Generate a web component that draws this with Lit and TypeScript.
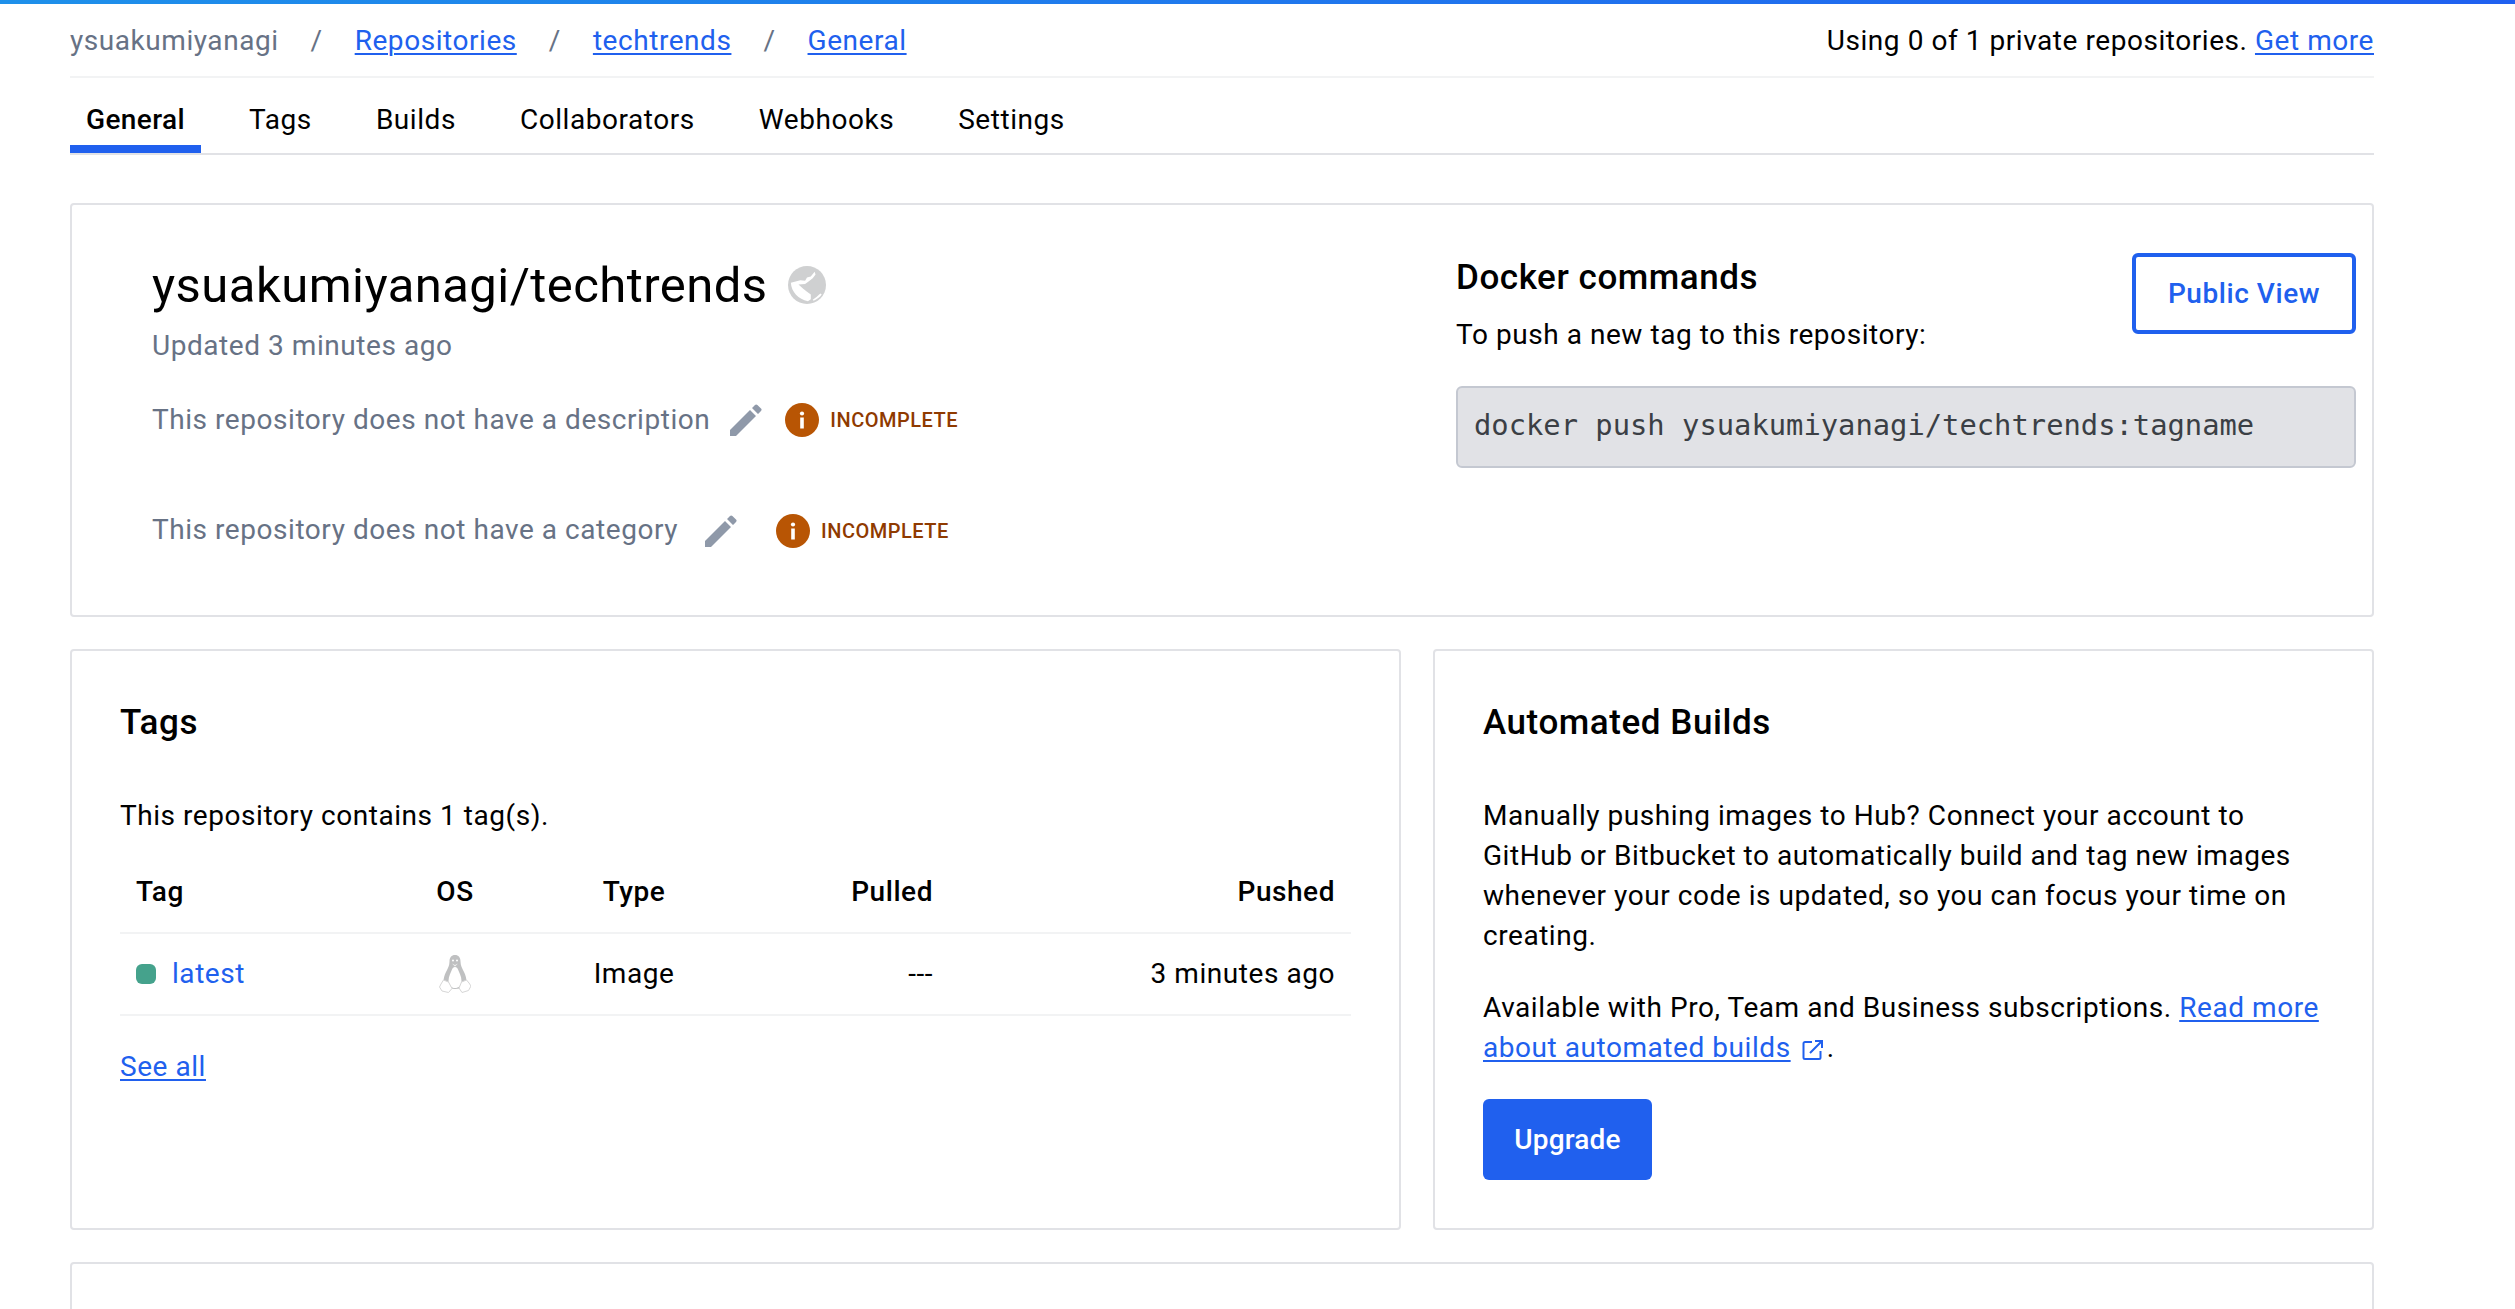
import { LitElement, html, css } from "lit";
import { customElement } from "lit/decorators.js";

const pencil = html`<svg class="pencil" viewBox="0 0 32 32"><path d="M0 32v-6L20 6l6 6L6 32z M22 4l3-3c.8-.8 1.600-.8 2.400 0l3.600 3.600c.8.800.8 1.600 0 2.400l-3 3z" fill="#8f99a9"/></svg>`;
const info = html`<svg class="info" viewBox="0 0 34 34"><circle cx="17" cy="17" r="17" fill="#b85504"/><circle cx="17" cy="10.500" r="2.100" fill="#fff"/><rect x="15.200" y="14.500" width="3.600" height="11" fill="#fff"/></svg>`;
const globe = html`<svg class="globe" viewBox="0 0 40 40"><circle cx="20" cy="20" r="20" fill="#cfd0d1"/>
  <path d="M28 6l-4 5-4 1-2 3.500-5-.5-10 2.500C3.500 27 11 35 21 37l3-2v-5l-4-3-4-3-5-4.500 7-.5 4-3 4-3 3-4z" fill="#fff"/>
  <path d="M26 35.500l4-3 4-3.500 1.500 1c-2 3-5 5-8.500 6.500z" fill="#fff"/>
</svg>`;
const penguin = html`<svg class="penguin" viewBox="0 0 32 40">
  <path d="M16 1c-3.500 0-5.500 2.500-5.500 6.500 0 4-1.500 6.500-3.500 10.500-1.500 3-2.500 6-2.500 10 0 4 4 7 11.500 7s11.500-3 11.500-7c0-4-1-7-2.500-10-2-4-3.500-6.500-3.500-10.500C21.500 3.500 19.500 1 16 1z" fill="#bfc0c1"/>
  <path d="M16 13c-1.500 0-2.500 1-3 2.500-1 3-3.500 6.500-3.500 11.500 0 4.500 3 7 6.500 7s6.500-2.500 6.500-7c0-5-2.500-8.500-3.500-11.500-.5-1.500-1.500-2.500-3-2.500z" fill="#fff"/>
  <path d="M13 9.500l3 1.500 3-1.500-3 3z" fill="#f1f1f1"/>
  <circle cx="14" cy="6.500" r="1" fill="#fff"/><circle cx="18" cy="6.500" r="1" fill="#fff"/>
  <path d="M4.500 26l5 2 3.500 6.500-3.500 4L3 37l-2.500-4 1.500-3z M27.500 26l-5 2-2.500 6 3 4.500 6.500-2 2.500-4.500-2-3z" fill="#fff" stroke="#d6d6d6" stroke-width="1"/>
</svg>`;
const external = html`<svg class="ext" viewBox="0 0 22 22" fill="none" stroke="#2060ee" stroke-width="2"><path d="M10 3H3a1.500 1.500 0 0 0-1.500 1.500v14A1.500 1.500 0 0 0 3 20h14a1.500 1.500 0 0 0 1.500-1.500V12"/><path d="M8 14L20 2M13 2h7v7"/></svg>`;

@customElement("app-root")
export class AppRoot extends LitElement {
  static styles = css`
    :host { display: block; font-family: Roboto, "Liberation Sans", sans-serif; font-size: 28px; line-height: 40px; letter-spacing: 0.55px; color: #000; background: #fff; height: 1309px; overflow: hidden; }
    * { box-sizing: border-box; }
    a { color: #2060ee; text-decoration: underline; text-underline-offset: 3px; text-decoration-thickness: 2px; }
    .topbar { height: 4px; background: linear-gradient(90deg, #1e90ea, #2060f0); }
    .page { margin-left: 70px; width: 2304px; }
    .crumbs { display: flex; justify-content: space-between; height: 74px; padding-top: 17px; border-bottom: 2px solid #f2f3f4; }
    .crumbs-left { display: flex; color: #677285; }
    .crumbs-left .sep { margin: 0 32px; color: #677285; }
    .tabs { display: flex; height: 77px; border-bottom: 2px solid #e1e2e6; }
    .tab { padding: 22px 16px 0; margin-right: 32px; height: 75px; }
    .tab.active { font-weight: 500; letter-spacing: 0.4px; border-bottom: 8px solid #2060ee; }
    .card { background: #fff; border: 2px solid #e1e2e6; border-radius: 4px; }
    .hero { margin-top: 48px; height: 414px; display: flex; }
    .hero-left { width: 1384px; padding: 49px 0 0 80px; }
    .title { display: flex; align-items: center; gap: 20px; font-size: 49px; line-height: 64px; letter-spacing: 0.44px; }
    .globe { width: 38px; height: 38px; margin-bottom: 2px; }
    .updated { color: #677285; margin-top: 8px; }
    .row { display: flex; align-items: center; color: #677285; height: 40px; }
    .row.one { margin-top: 34px; }
    .row.two { margin-top: 71px; }
    .row.two span:first-child { margin-bottom: 3px; }
    .pencil { width: 32px; height: 32px; margin-left: 20px; }
    .row.two .pencil { margin-left: 27px; }
    .info { width: 34px; height: 34px; }
    .row.one .info { margin-left: 23px; }
    .row.two .info { margin-left: 39px; }
    .badge { font-size: 20px; font-weight: 500; color: #8f3a00; margin-left: 11px; letter-spacing: 0.5px; }
    .hero-right { flex: 1; padding: 49px 16px 0 0; }
    .hero-head { display: flex; justify-content: space-between; align-items: flex-start; }
    .h2 { font-size: 35px; font-weight: 500; line-height: 48px; }
    .push { margin-top: 13px; }
    .public { width: 224px; height: 81px; margin-top: -1px; border: 4px solid #2060ee; border-radius: 6px; color: #2060ee; font-weight: 500; display: flex; align-items: center; justify-content: center; }
    .code { margin-top: 31px; height: 82px; padding: 0 0 4px 16px; background: #e1e2e6; border: 2px solid #c4c8d1; border-radius: 6px; display: flex; align-items: center; font-family: "DejaVu Sans Mono", monospace; font-size: 28.800px; letter-spacing: 0; color: #3b3f45; }
    .grid { display: grid; grid-template-columns: 1331px 941px; gap: 32px; margin-top: 32px; }
    .panel { height: 581px; padding: 50px 48px 0; }
    .panel .h2 { line-height: 44px; }
    .intro { margin-top: 51px; }
    .table { display: grid; grid-template-columns: 275px 120px 238px 196px 402px; margin-top: 14px; }
    .cell { display: flex; align-items: center; padding: 0 16px; border-bottom: 2px solid #f2f3f4; }
    .th { font-weight: 500; height: 84px; padding-top: 2px; }
    .tr { height: 82px; }
    .r { justify-content: flex-end; }
    .c { justify-content: center; padding-left: 0; padding-right: 0; }
    .dot { width: 20px; height: 20px; border-radius: 6px; background: #45a28c; margin-right: 16px; }
    .tag-link { color: #2060ee; text-decoration: none; }
    .penguin { width: 32px; height: 40px; }
    .seeall { display: inline-block; margin-top: 31px; }
    .para { margin: 0; }
    .para + .para { margin-top: 32px; }
    .ext { width: 22px; height: 22px; margin: 0 3px 0 11px; vertical-align: -4px; }
    .upgrade { margin-top: 31px; width: 169px; height: 81px; background: #2060ee; color: #fff; font-weight: 500; letter-spacing: 0.2px; border-radius: 6px; display: flex; align-items: center; justify-content: center; }
    .last { margin-top: 32px; height: 200px; }
  `;

  render() {
    return html`
      <div class="topbar"></div>
      <div class="page">
        <div class="crumbs">
          <div class="crumbs-left">
            <span>ysuakumiyanagi</span><span class="sep">/</span>
            <a href="#">Repositories</a><span class="sep">/</span>
            <a href="#">techtrends</a><span class="sep">/</span>
            <a href="#">General</a>
          </div>
          <div>Using 0 of 1 private repositories. <a href="#">Get more</a></div>
        </div>
        <div class="tabs">
          <div class="tab active">General</div>
          <div class="tab">Tags</div>
          <div class="tab">Builds</div>
          <div class="tab">Collaborators</div>
          <div class="tab">Webhooks</div>
          <div class="tab">Settings</div>
        </div>
        <div class="card hero">
          <div class="hero-left">
            <div class="title"><span>ysuakumiyanagi/techtrends</span>${globe}</div>
            <div class="updated">Updated 3 minutes ago</div>
            <div class="row one"><span>This repository does not have a description</span>${pencil}${info}<span class="badge">INCOMPLETE</span></div>
            <div class="row two"><span>This repository does not have a category</span>${pencil}${info}<span class="badge">INCOMPLETE</span></div>
          </div>
          <div class="hero-right">
            <div class="hero-head">
              <div>
                <div class="h2">Docker commands</div>
                <div class="push">To push a new tag to this repository:</div>
              </div>
              <div class="public">Public View</div>
            </div>
            <div class="code">docker push ysuakumiyanagi/techtrends:tagname</div>
          </div>
        </div>
        <div class="grid">
          <div class="card panel">
            <div class="h2">Tags</div>
            <div class="intro">This repository contains 1 tag(s).</div>
            <div class="table">
              <div class="cell th">Tag</div>
              <div class="cell th c">OS</div>
              <div class="cell th c">Type</div>
              <div class="cell th r">Pulled</div>
              <div class="cell th r">Pushed</div>
              <div class="cell tr"><span class="dot"></span><span class="tag-link">latest</span></div>
              <div class="cell tr c">${penguin}</div>
              <div class="cell tr c">Image</div>
              <div class="cell tr r">---</div>
              <div class="cell tr r">3 minutes ago</div>
            </div>
            <a class="seeall" href="#">See all</a>
          </div>
          <div class="card panel">
            <div class="h2">Automated Builds</div>
            <div class="intro">
              <p class="para">Manually pushing images to Hub? Connect your account to GitHub or Bitbucket to automatically build and tag new images whenever your code is updated, so you can focus your time on creating.</p>
              <p class="para">Available with Pro, Team and Business subscriptions. <a href="#">Read more about automated builds</a>${external}.</p>
            </div>
            <div class="upgrade">Upgrade</div>
          </div>
        </div>
        <div class="card last"></div>
      </div>
    `;
  }
}
